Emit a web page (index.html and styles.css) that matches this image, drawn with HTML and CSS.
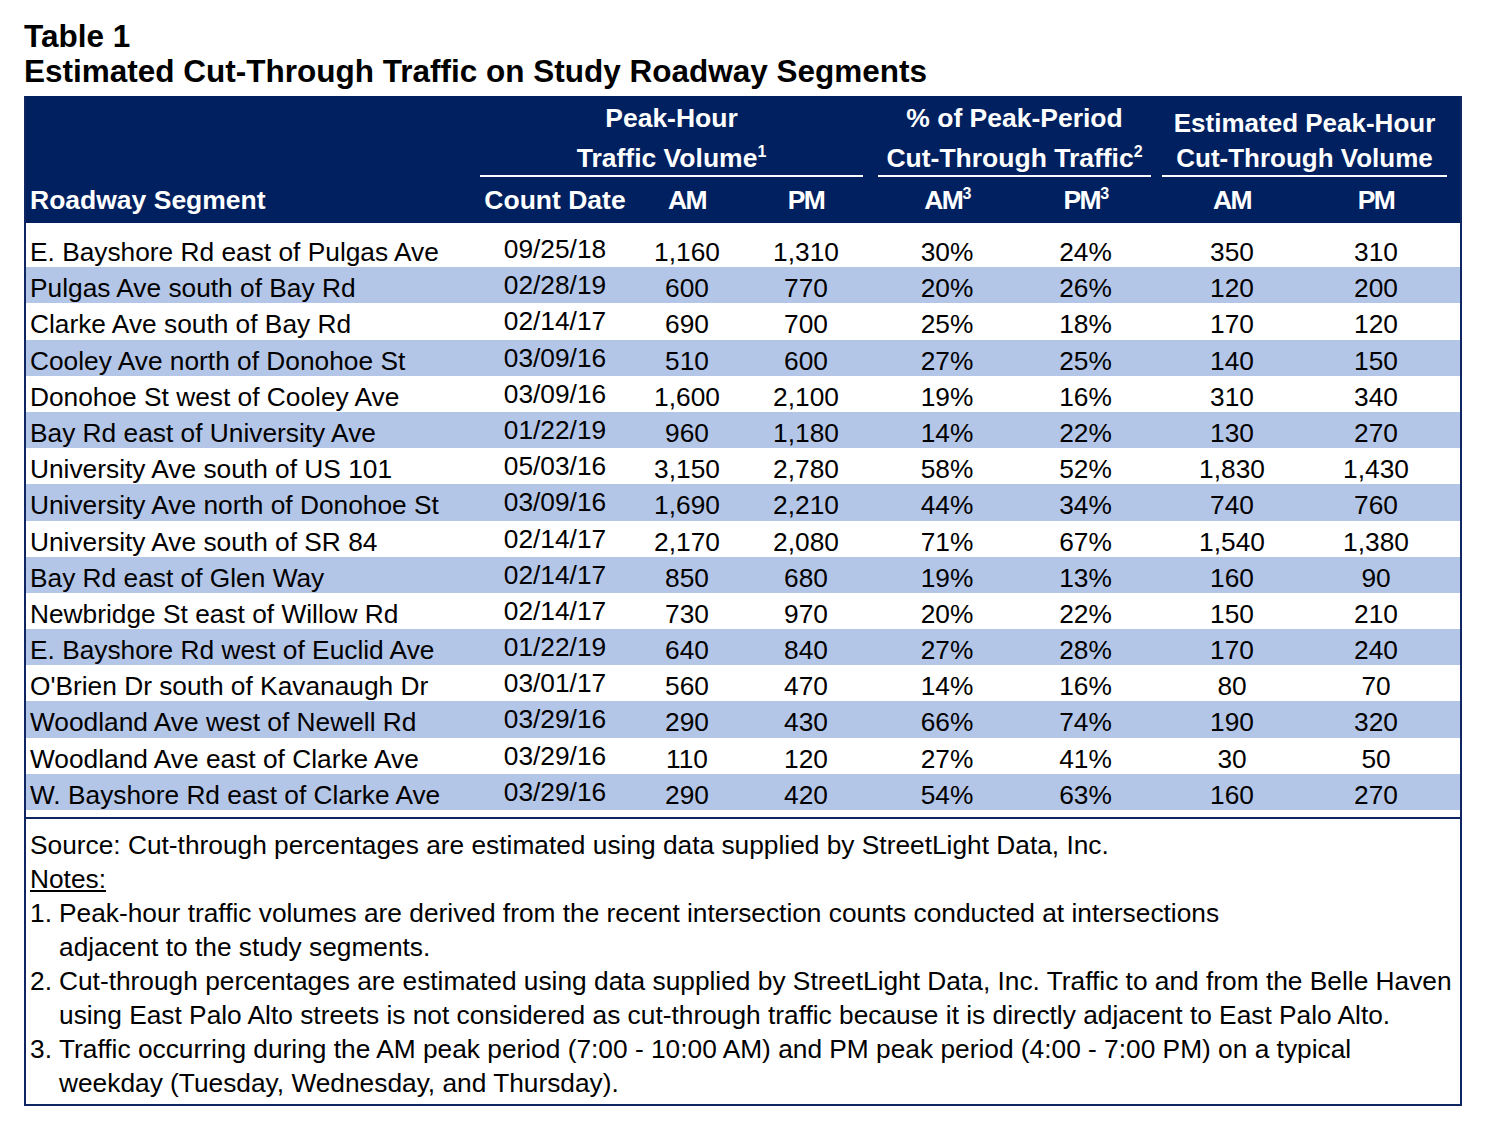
FILE: index.html
```html
<!DOCTYPE html>
<html>
<head>
<meta charset="utf-8">
<link rel="stylesheet" href="styles.css">
</head>
<body>
<div class="page">
  <h1 class="title">Table 1<br>Estimated Cut-Through Traffic on Study Roadway Segments</h1>
  <div class="frame">
    <table class="tbl">
      <colgroup>
        <col class="c-seg"><col class="c-date"><col class="c-am"><col class="c-pm">
        <col class="c-pam"><col class="c-ppm"><col class="c-eam"><col class="c-epm">
      </colgroup>
      <thead>
        <tr class="h-group">
          <th></th>
          <th colspan="3"><div class="grp grp-peak"><span class="l1">Peak-Hour</span><span class="l2">Traffic Volume<sup>1</sup></span></div></th>
          <th colspan="2"><div class="grp grp-pct"><span class="l1">% of Peak-Period</span><span class="l2">Cut-Through Traffic<sup>2</sup></span></div></th>
          <th colspan="2"><div class="grp grp-est"><span class="l1">Estimated Peak-Hour</span><span class="l2">Cut-Through Volume</span></div></th>
        </tr>
        <tr class="h-cols">
          <th class="seg">Roadway Segment</th>
          <th>Count Date</th>
          <th class="narrow">AM</th>
          <th class="narrow">PM</th>
          <th class="narrow">AM<sup>3</sup></th>
          <th class="narrow">PM<sup>3</sup></th>
          <th class="narrow">AM</th>
          <th class="narrow">PM</th>
        </tr>
      </thead>
      <tbody>
        <tr class="spacer"><td colspan="8"></td></tr>
        <tr><td class="seg">E. Bayshore Rd east of Pulgas Ave</td><td class="date">09/25/18</td><td>1,160</td><td>1,310</td><td>30%</td><td>24%</td><td>350</td><td>310</td></tr>
        <tr class="band"><td class="seg">Pulgas Ave south of Bay Rd</td><td class="date">02/28/19</td><td>600</td><td>770</td><td>20%</td><td>26%</td><td>120</td><td>200</td></tr>
        <tr><td class="seg">Clarke Ave south of Bay Rd</td><td class="date">02/14/17</td><td>690</td><td>700</td><td>25%</td><td>18%</td><td>170</td><td>120</td></tr>
        <tr class="band"><td class="seg">Cooley Ave north of Donohoe St</td><td class="date">03/09/16</td><td>510</td><td>600</td><td>27%</td><td>25%</td><td>140</td><td>150</td></tr>
        <tr><td class="seg">Donohoe St west of Cooley Ave</td><td class="date">03/09/16</td><td>1,600</td><td>2,100</td><td>19%</td><td>16%</td><td>310</td><td>340</td></tr>
        <tr class="band"><td class="seg">Bay Rd east of University Ave</td><td class="date">01/22/19</td><td>960</td><td>1,180</td><td>14%</td><td>22%</td><td>130</td><td>270</td></tr>
        <tr><td class="seg">University Ave south of US 101</td><td class="date">05/03/16</td><td>3,150</td><td>2,780</td><td>58%</td><td>52%</td><td>1,830</td><td>1,430</td></tr>
        <tr class="band"><td class="seg">University Ave north of Donohoe St</td><td class="date">03/09/16</td><td>1,690</td><td>2,210</td><td>44%</td><td>34%</td><td>740</td><td>760</td></tr>
        <tr><td class="seg">University Ave south of SR 84</td><td class="date">02/14/17</td><td>2,170</td><td>2,080</td><td>71%</td><td>67%</td><td>1,540</td><td>1,380</td></tr>
        <tr class="band"><td class="seg">Bay Rd east of Glen Way</td><td class="date">02/14/17</td><td>850</td><td>680</td><td>19%</td><td>13%</td><td>160</td><td>90</td></tr>
        <tr><td class="seg">Newbridge St east of Willow Rd</td><td class="date">02/14/17</td><td>730</td><td>970</td><td>20%</td><td>22%</td><td>150</td><td>210</td></tr>
        <tr class="band"><td class="seg">E. Bayshore Rd west of Euclid Ave</td><td class="date">01/22/19</td><td>640</td><td>840</td><td>27%</td><td>28%</td><td>170</td><td>240</td></tr>
        <tr><td class="seg">O'Brien Dr south of Kavanaugh Dr</td><td class="date">03/01/17</td><td>560</td><td>470</td><td>14%</td><td>16%</td><td>80</td><td>70</td></tr>
        <tr class="band"><td class="seg">Woodland Ave west of Newell Rd</td><td class="date">03/29/16</td><td>290</td><td>430</td><td>66%</td><td>74%</td><td>190</td><td>320</td></tr>
        <tr><td class="seg">Woodland Ave east of Clarke Ave</td><td class="date">03/29/16</td><td>110</td><td>120</td><td>27%</td><td>41%</td><td>30</td><td>50</td></tr>
        <tr class="band"><td class="seg">W. Bayshore Rd east of Clarke Ave</td><td class="date">03/29/16</td><td>290</td><td>420</td><td>54%</td><td>63%</td><td>160</td><td>270</td></tr>
        <tr class="spacer-end"><td colspan="8"></td></tr>
      </tbody>
    </table>
    <div class="notes">
      <p class="src">Source: Cut-through percentages are estimated using data supplied by StreetLight Data, Inc.</p>
      <p class="nh"><u>Notes:</u></p>
      <ol class="nlist">
        <li><span class="num">1.</span><span class="txt">Peak-hour traffic volumes are derived from the recent intersection counts conducted at intersections<br>adjacent to the study segments.</span></li>
        <li><span class="num">2.</span><span class="txt">Cut-through percentages are estimated using data supplied by StreetLight Data, Inc. Traffic to and from the Belle Haven<br>using East Palo Alto streets is not considered as cut-through traffic because it is directly adjacent to East Palo Alto.</span></li>
        <li><span class="num">3.</span><span class="txt">Traffic occurring during the AM peak period (7:00 - 10:00 AM) and PM peak period (4:00 - 7:00 PM) on a typical<br>weekday (Tuesday, Wednesday, and Thursday).</span></li>
      </ol>
    </div>
  </div>
</div>
</body>
</html>
```
FILE: styles.css
```css
html, body { margin: 0; padding: 0; background: #fff; }
body { font-family: "Liberation Sans", Arial, sans-serif; color: #000; }
.page { padding: 19px 0 0 24px; width: 1438px; }
.title { margin: 0 0 7px 0; font-size: 31.5px; line-height: 35px; font-weight: bold; }
.frame { border: 2px solid #0f2663; border-top: 0; width: 1434px; }
.tbl { border-collapse: collapse; table-layout: fixed; width: 1434px; }
.c-seg { width: 454px; } .c-date { width: 150px; } .c-am { width: 114px; } .c-pm { width: 124px; }
.c-pam { width: 150px; } .c-ppm { width: 139px; } .c-eam { width: 150px; } .c-epm { width: 153px; }
thead th { background: #002060; color: #fff; font-weight: bold; font-size: 26.5px; padding: 0; text-align: center; }
.h-group th { height: 81px; vertical-align: bottom; }
.grp { margin: 0 5px 0 0; border-bottom: 2px solid #fff; }
.grp .l1, .grp .l2 { display: block; white-space: nowrap; }
.grp .l1 { line-height: 40px; margin-bottom: 3px; }
.grp .l2 { line-height: 34px; }
.grp-pct { margin: 0 6px 0 10px; }
.grp-est { margin: 0 13px 0 5px; font-size: 26px; }
.grp-est .l1 { line-height: 36px; margin-bottom: 0; }
.h-group sup, .h-cols sup { font-size: 16px; line-height: 0; vertical-align: 10px; }
.h-cols th { height: 46px; }
.h-cols th.seg { text-align: left; padding-left: 4px; }
.narrow { letter-spacing: -1.5px; }
.h-cols th:nth-child(5) { padding-left: 8px; }
.h-cols th:nth-child(6) { padding-right: 4px; }
.h-cols th:nth-child(8) { padding-right: 15px; }
tbody td { font-size: 26.3px; height: 36.2px; padding: 7px 0 0 0; text-align: center; line-height: 29px; vertical-align: top; box-sizing: border-box; }
tbody td.seg { text-align: left; padding-left: 4px; }
tbody td.date { padding-top: 4px; }
tbody td:nth-child(5) { padding-left: 8px; }
tbody td:nth-child(6) { padding-right: 4px; }
tbody td:nth-child(8) { padding-right: 15px; }
tr.band td { background: #b4c6e7; }
tr.spacer td { height: 8px; padding: 0; }
tr.spacer-end td { height: 8px; padding: 0; border-bottom: 2px solid #0f2663; }
.notes { padding: 9px 4px 4px 4px; font-size: 26.3px; }
.notes p { margin: 0; line-height: 34px; }
.nlist { list-style: none; margin: 0; padding: 0; }
.nlist li { display: flex; line-height: 34px; }
.num { width: 29px; flex: none; }
```
